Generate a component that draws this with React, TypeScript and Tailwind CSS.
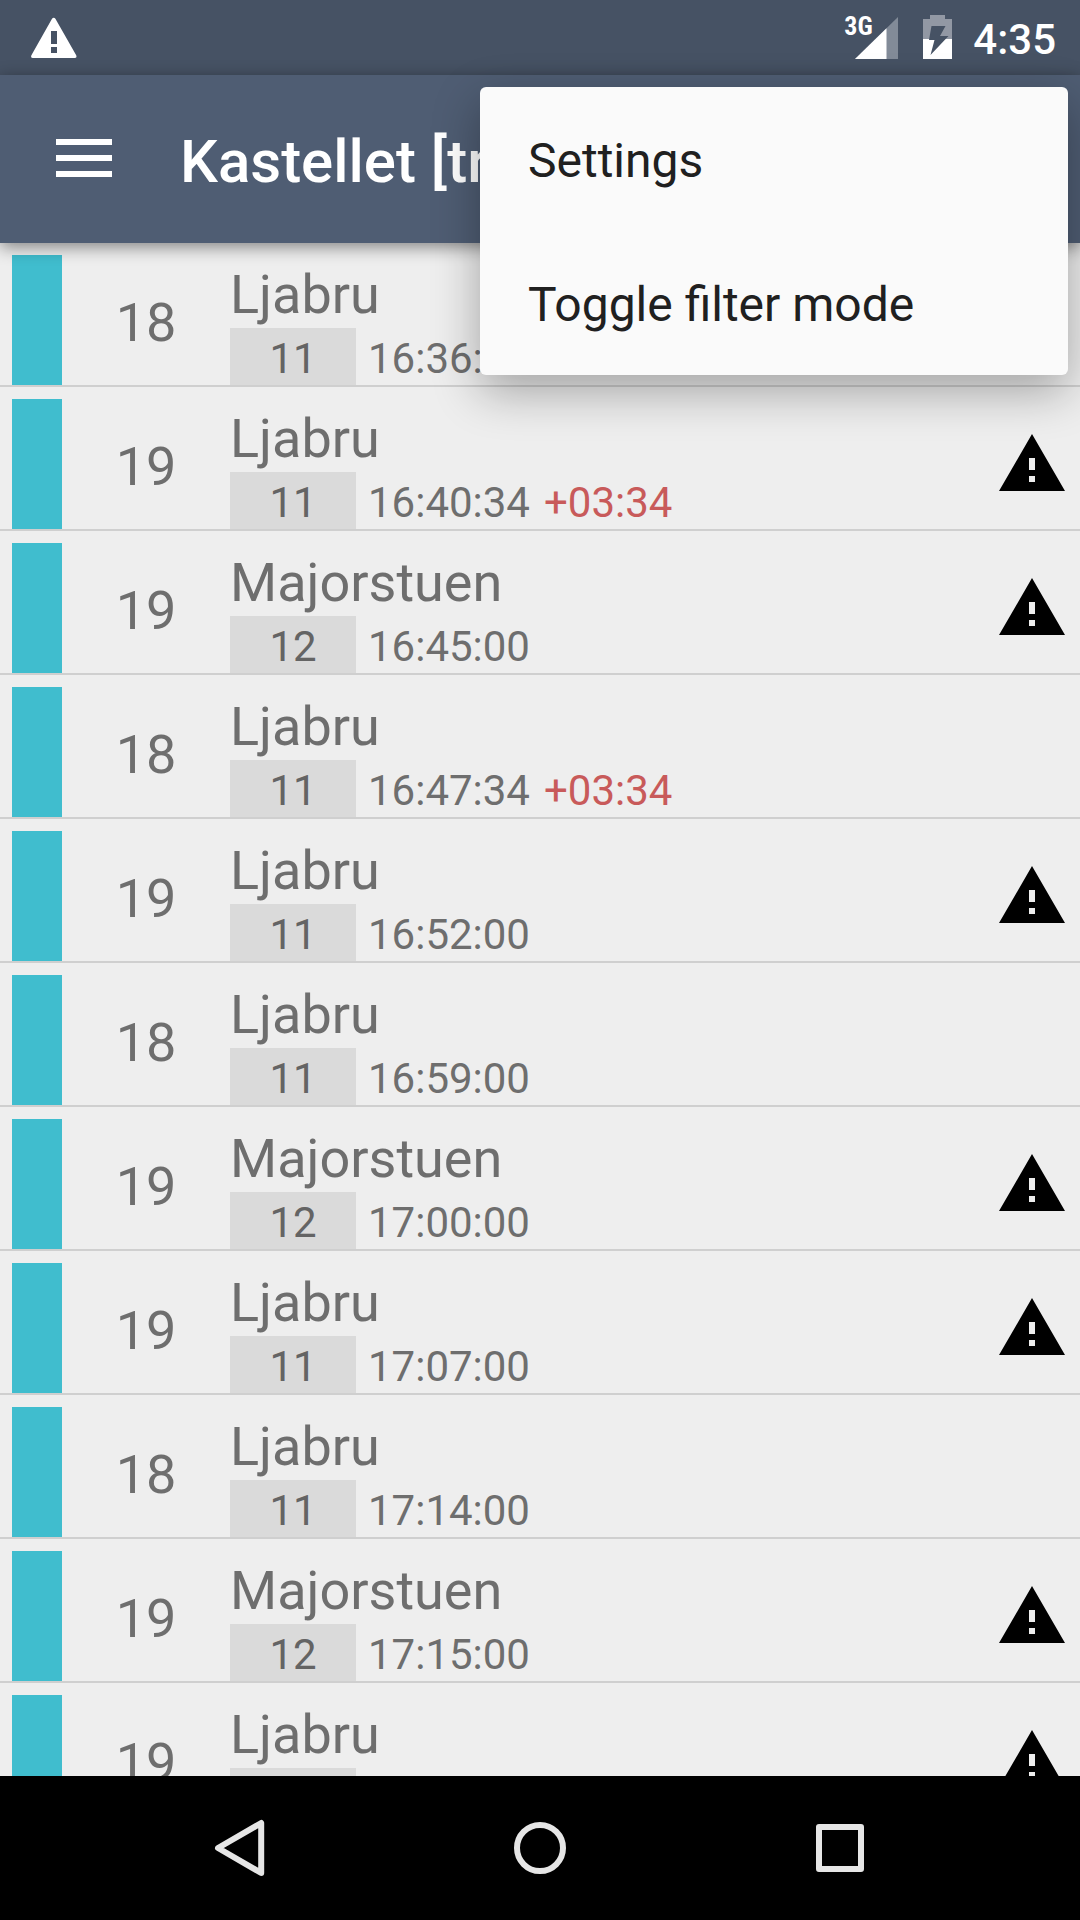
type Departure = {
  line: string;
  destination: string;
  platform: string;
  time: string;
  delay?: string;
  alert?: boolean;
};

const departures: Departure[] = [
  { line: "18", destination: "Ljabru", platform: "11", time: "16:36:34", delay: "+03:34" },
  { line: "19", destination: "Ljabru", platform: "11", time: "16:40:34", delay: "+03:34", alert: true },
  { line: "19", destination: "Majorstuen", platform: "12", time: "16:45:00", alert: true },
  { line: "18", destination: "Ljabru", platform: "11", time: "16:47:34", delay: "+03:34" },
  { line: "19", destination: "Ljabru", platform: "11", time: "16:52:00", alert: true },
  { line: "18", destination: "Ljabru", platform: "11", time: "16:59:00" },
  { line: "19", destination: "Majorstuen", platform: "12", time: "17:00:00", alert: true },
  { line: "19", destination: "Ljabru", platform: "11", time: "17:07:00", alert: true },
  { line: "18", destination: "Ljabru", platform: "11", time: "17:14:00" },
  { line: "19", destination: "Majorstuen", platform: "12", time: "17:15:00", alert: true },
  { line: "19", destination: "Ljabru", platform: "11", time: "17:22:00", alert: true },
];

function StatusBar() {
  return (
    <div className="flex h-[75px] shrink-0 items-center justify-between bg-[#465264] pl-[30px] pr-6 text-white">
      <svg width="48" height="42" viewBox="0 0 48 42" aria-hidden="true">
        <path
          fill="#fff"
          fillRule="evenodd"
          d="M22 1.8c.9-1.4 2.6-1.4 3.4 0l20.8 36.4c.7 1.3.2 2.8-1.4 2.8H2.800c-1.600 0-2.100-1.500-1.400-2.800zM21 14v13h6V14zM21 30v6h6v-6z"
        />
      </svg>
      <div className="flex items-center">
        <div className="relative">
          <svg width="54" height="44" viewBox="0 0 54 44" aria-hidden="true">
            <path fill="#828b98" d="M54 1v42H11z" />
            <path fill="#fff" d="M42.500 12.200V43H11z" />
          </svg>
          <span className="absolute -top-1 left-0 font-['Roboto_Condensed',Roboto,sans-serif] text-[26px] leading-7 font-bold">
            3G
          </span>
        </div>
        <svg className="mb-[2px] ml-6" width="31" height="44" viewBox="0 0 31 44" aria-hidden="true">
          <path fill="#9298a4" d="M8 0h15v4h7v20H1V4h7z" />
          <path fill="#fff" d="M1 24h29v20H1z" />
          <path fill="#465264" d="M9.500 11H23.500L18 21h8.500L8.500 40l4-15H7z" />
        </svg>
        <span className="ml-5 pt-1 text-[42px] leading-[48px] font-medium">4:35</span>
      </div>
    </div>
  );
}

function AppBar() {
  return (
    <header className="relative z-10 flex h-[168px] shrink-0 items-center bg-[#4f5d73] pl-12 shadow-[0_4px_16px_rgba(0,0,0,0.45)]">
      <button type="button" aria-label="Open navigation" className="flex h-[72px] w-[72px] items-center justify-center">
        <svg width="56" height="40" viewBox="0 0 56 40" aria-hidden="true">
          <path fill="#fff" d="M0 0h56v6H0zM0 16h56v6H0zM0 32h56v6H0z" />
        </svg>
      </button>
      <h1 className="ml-[60px] truncate pt-[6px] text-[60px] leading-[72px] font-medium text-white">
        Kastellet [trikk]
      </h1>
    </header>
  );
}

function OverflowMenu() {
  return (
    <div
      role="menu"
      className="absolute top-[87px] right-3 z-20 flex w-[588px] flex-col rounded-md bg-[#fafafa] shadow-[0_16px_48px_rgba(0,0,0,0.32)]"
    >
      {["Settings", "Toggle filter mode"].map((label) => (
        <button
          key={label}
          type="button"
          role="menuitem"
          className="h-[144px] px-12 pt-1 text-left text-[48px] leading-[56px] text-[#202020]"
        >
          {label}
        </button>
      ))}
    </div>
  );
}

function DepartureRow({ departure }: { departure: Departure }) {
  return (
    <li className="flex h-[144px] border-b-2 border-[#cfcfcf] px-3 pt-3">
      <div className="w-[50px] bg-[#40bdce]" />
      <div className="flex w-[168px] items-center justify-center pt-[6px] text-[54px] leading-[64px]">
        {departure.line}
      </div>
      <div className="min-w-0 flex-1">
        <div className="truncate pt-[7px] text-[54px] leading-[66px]">{departure.destination}</div>
        <div className="flex text-[42px] leading-[53px]">
          <span className="w-[126px] bg-[#dadada] pt-1 text-center text-[#646464]">{departure.platform}</span>
          <span className="pt-1 pl-3">{departure.time}</span>
          {departure.delay && <span className="pt-1 pl-[14px] text-[#c85a5a]">{departure.delay}</span>}
        </div>
      </div>
      {departure.alert && (
        <svg
          className="shrink-0 self-center"
          width="72"
          height="72"
          viewBox="0 0 24 24"
          role="img"
          aria-label="Service alert"
        >
          <path fill="#000" d="M1 21h22L12 2 1 21zm12-3h-2v-2h2v2zm0-4h-2v-4h2v4z" />
        </svg>
      )}
    </li>
  );
}

function NavigationBar() {
  return (
    <nav className="z-10 flex h-[144px] shrink-0 bg-black px-[8.333%]">
      <button type="button" aria-label="Back" className="flex flex-1 items-center justify-center">
        <svg width="60" height="60" viewBox="0 0 60 60" fill="none" stroke="#e6e6e6" strokeWidth="6" strokeLinejoin="round">
          <path d="M51.200 5v50L8 30z" />
        </svg>
      </button>
      <button type="button" aria-label="Home" className="flex flex-1 items-center justify-center">
        <svg width="60" height="60" viewBox="0 0 60 60" fill="none" stroke="#e6e6e6" strokeWidth="6">
          <circle cx="30" cy="30" r="23" />
        </svg>
      </button>
      <button type="button" aria-label="Recent apps" className="flex flex-1 items-center justify-center">
        <svg width="60" height="60" viewBox="0 0 60 60" fill="none" stroke="#e6e6e6" strokeWidth="6" strokeLinejoin="round">
          <path d="M9 9h42v42H9z" />
        </svg>
      </button>
    </nav>
  );
}

export default function App() {
  return (
    <div className="relative flex h-screen flex-col overflow-hidden bg-[#eeeeee] font-[Roboto,sans-serif]">
      <StatusBar />
      <AppBar />
      <ul className="min-h-0 flex-1 overflow-hidden text-[#6e6e6e]">
        {departures.map((departure) => (
          <DepartureRow key={departure.time} departure={departure} />
        ))}
      </ul>
      <NavigationBar />
      <OverflowMenu />
    </div>
  );
}
